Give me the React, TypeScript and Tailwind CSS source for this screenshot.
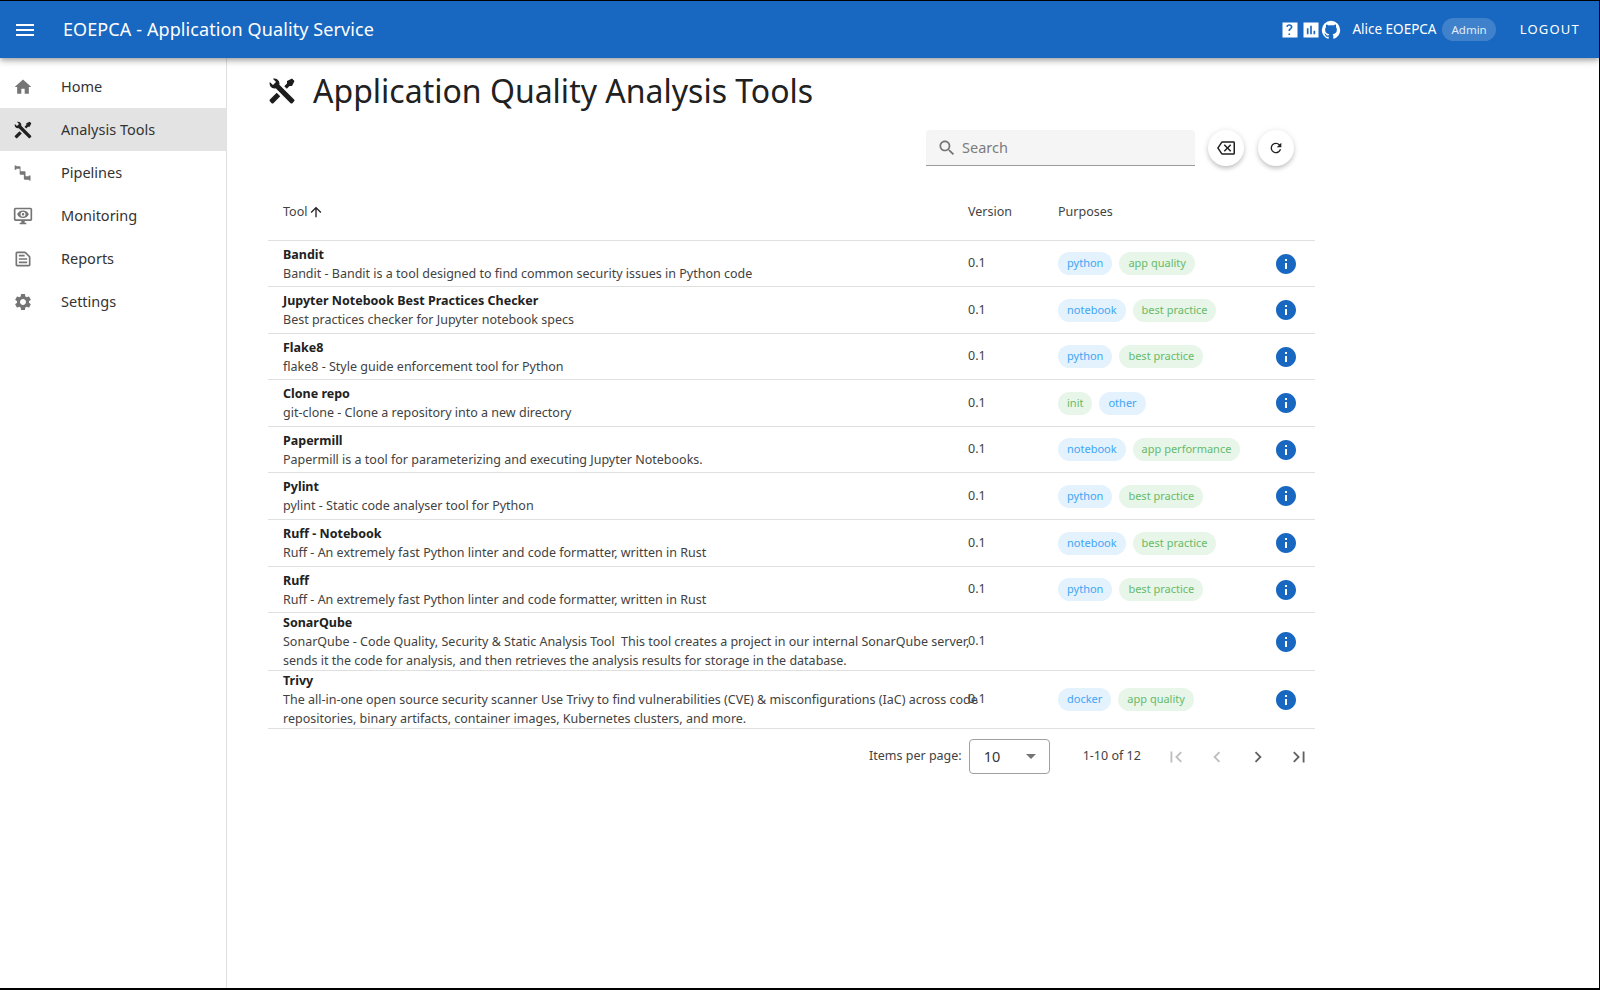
import React from "react";

const P = ({ d, size = 24, className = "" }: { d: string; size?: number; className?: string }) => (
  <svg viewBox="0 0 24 24" width={size} height={size} fill="currentColor" className={className}>
    <path d={d} />
  </svg>
);

const tools = "M21.71 20.29L20.29 21.71A1 1 0 0 1 18.88 21.71L7 9.85A3.81 3.81 0 0 1 6 10A4 4 0 0 1 2.22 4.7L4.76 7.24L5.29 6.71L6.71 5.29L7.24 4.76L4.7 2.22A4 4 0 0 1 10 6A3.81 3.81 0 0 1 9.85 7L21.71 18.88A1 1 0 0 1 21.71 20.29M2.29 18.88A1 1 0 0 0 2.29 20.29L3.71 21.71A1 1 0 0 0 5.12 21.71L10.59 16.25L7.76 13.42M20 2L16 4V6L13.83 8.17L15.83 10.17L18 8H20L22 4Z";
const home = "M10 20v-6h4v6h5v-8h3L12 3 2 12h3v8z";
const pipe = "M2 3h2v1h4a1 1 0 0 1 1 1v5h5a1 1 0 0 1 1 1v5h4v-1h2v6h-2v-1h-5a1 1 0 0 1-1-1v-5H9a1 1 0 0 1-1-1V7H4v1H2z";
const monitorEye = "M3 2C1.9 2 1 2.9 1 4v12c0 1.1.9 2 2 2h7v2H8v2h8v-2h-2v-2h7c1.1 0 2-.9 2-2V4c0-1.1-.9-2-2-2zm0 2h18v12H3zm9 1.5C8.7 5.5 6 7.5 5 10c1 2.5 3.7 4.500 7 4.500s6-2 7-4.500c-1-2.500-3.700-4.500-7-4.500zm0 1.500a3 3 0 1 1 0 6 3 3 0 0 1 0-6zm0 1.500a1.500 1.500 0 1 0 0 3 1.500 1.500 0 0 0 0-3z";
const report = "M14.17 5L19 9.83V19H5V5h9.170M14.170 3H5c-1.100 0-2 .9-2 2v14c0 1.100.9 2 2 2h14c1.100 0 2-.9 2-2V9.830c0-.53-.21-1.040-.59-1.410l-4.830-4.830c-.37-.38-.88-.59-1.410-.59zM7 15h10v2H7zm0-4h10v2H7zm0-4h7v2H7z";
const cog = "M19.14 12.94c.04-.3.060-.61.060-.94 0-.32-.02-.64-.07-.94l2.030-1.580c.18-.14.23-.41.120-.61l-1.920-3.320c-.12-.22-.37-.29-.59-.22l-2.390.96c-.5-.38-1.030-.7-1.620-.94l-.36-2.540c-.04-.24-.24-.41-.48-.41h-3.840c-.24 0-.43.17-.47.41l-.36 2.540c-.59.24-1.130.57-1.620.94l-2.390-.96c-.22-.08-.47 0-.59.22L2.740 8.870c-.12.21-.08.47.12.61l2.030 1.580c-.05.3-.09.63-.09.94s.02.64.07.94l-2.030 1.580c-.18.14-.23.41-.12.61l1.920 3.320c.12.22.37.29.59.22l2.390-.96c.5.38 1.030.7 1.620.94l.36 2.540c.05.24.24.41.48.41h3.840c.24 0 .44-.17.47-.41l.36-2.540c.59-.24 1.130-.56 1.620-.94l2.390.96c.22.08.47 0 .59-.22l1.920-3.320c.12-.22.07-.47-.12-.61l-2.010-1.580zM12 15.600c-1.980 0-3.600-1.620-3.600-3.600s1.620-3.600 3.600-3.600 3.600 1.620 3.600 3.600-1.620 3.600-3.600 3.600z";
const menu = "M3 18h18v-2H3v2zm0-5h18v-2H3v2zm0-7v2h18V6H3z";
const help = "M3 3h18v18H3zm9.100 13.200h-1.900v1.800h1.900zm-.9-11.200c-2.100 0-3.500 1.200-3.700 3.100l1.900.3c.1-1 .8-1.600 1.800-1.600s1.700.6 1.700 1.500c0 .7-.4 1.100-1.100 1.700-.9.7-1.600 1.400-1.600 2.800v.4h1.900v-.3c0-.8.4-1.200 1.100-1.800.9-.7 1.700-1.500 1.700-2.900 0-2-1.600-3.200-3.700-3.200z";
const bars = "M3 3h18v18H3zM7 10v7h2v-7zM11 7v10h2V7zM15 13v4h2v-4z";
const github = "M12 2A10 10 0 0 0 2 12c0 4.420 2.870 8.170 6.840 9.500.5.080.66-.23.660-.5v-1.690c-2.770.6-3.360-1.340-3.360-1.340-.46-1.160-1.110-1.470-1.110-1.470-.91-.62.070-.6.070-.6 1 .07 1.530 1.030 1.530 1.030.87 1.520 2.340 1.070 2.910.83.090-.65.350-1.090.630-1.340-2.220-.25-4.550-1.110-4.550-4.920 0-1.110.38-2 1.030-2.710-.1-.25-.45-1.290.1-2.640 0 0 .84-.27 2.750 1.020.79-.22 1.650-.33 2.500-.33.850 0 1.710.11 2.500.33 1.910-1.290 2.750-1.020 2.750-1.020.55 1.350.2 2.390.1 2.640.65.71 1.030 1.600 1.030 2.710 0 3.820-2.340 4.660-4.570 4.910.36.31.69.92.69 1.850V21c0 .27.160.59.670.5C19.140 20.160 22 16.420 22 12A10 10 0 0 0 12 2z";
const search = "M15.500 14h-.79l-.28-.27C15.410 12.590 16 11.110 16 9.500 16 5.910 13.090 3 9.500 3S3 5.910 3 9.500 5.910 16 9.500 16c1.610 0 3.090-.59 4.230-1.570l.27.28v.79l5 4.990L20.490 19l-4.990-5zm-6 0C7.010 14 5 11.990 5 9.500S7.010 5 9.500 5 14 7.010 14 9.500 11.990 14 9.500 14z";
const backspace = "M22 3H7c-.69 0-1.230.35-1.590.88L0 12l5.410 8.110c.36.53.9.89 1.590.89h15c1.100 0 2-.9 2-2V5c0-1.100-.9-2-2-2zm0 16H7.070L2.400 12l4.660-7H22v14zm-11.590-2L14 13.410 17.590 17 19 15.590 15.410 12 19 8.410 17.590 7 14 10.590 10.410 7 9 8.410 12.590 12 9 15.590z";
const refresh = "M17.650 6.350A7.960 7.960 0 0 0 12 4a8 8 0 1 0 7.730 10h-2.080A6 6 0 1 1 12 6c1.660 0 3.140.69 4.220 1.780L13 11h7V4z";
const up = "M4 12l1.410 1.410L11 7.830V20h2V7.830l5.580 5.590L20 12l-8-8-8 8z";
const info = "M12 2C6.480 2 2 6.480 2 12s4.480 10 10 10 10-4.480 10-10S17.520 2 12 2zm1 15h-2v-6h2v6zm0-8h-2V7h2v2z";
const first = "M18.410 16.590L13.820 12l4.590-4.590L17 6l-6 6 6 6zM6 6h2v12H6z";
const prev = "M15.410 7.410L14 6l-6 6 6 6 1.410-1.410L10.830 12z";
const next = "M10 6L8.590 7.410 13.170 12l-4.580 4.590L10 18l6-6z";
const last = "M5.590 7.410L10.180 12l-4.590 4.590L7 18l6-6-6-6zM16 6h2v12h-2z";

const nav = [
  { label: "Home", d: home },
  { label: "Analysis Tools", d: tools, active: true },
  { label: "Pipelines", d: pipe },
  { label: "Monitoring", d: monitorEye },
  { label: "Reports", d: report },
  { label: "Settings", d: cog },
];

type Row = { name: string; desc: string[]; chips: [string, "b" | "g"][]; h: string };
const rows: Row[] = [
  { name: "Bandit", desc: ["Bandit - Bandit is a tool designed to find common security issues in Python code"], chips: [["python", "b"], ["app quality", "g"]], h: "h-[46px]" },
  { name: "Jupyter Notebook Best Practices Checker", desc: ["Best practices checker for Jupyter notebook specs"], chips: [["notebook", "b"], ["best practice", "g"]], h: "h-[47px]" },
  { name: "Flake8", desc: ["flake8 - Style guide enforcement tool for Python"], chips: [["python", "b"], ["best practice", "g"]], h: "h-[46px]" },
  { name: "Clone repo", desc: ["git-clone - Clone a repository into a new directory"], chips: [["init", "g"], ["other", "b"]], h: "h-[47px]" },
  { name: "Papermill", desc: ["Papermill is a tool for parameterizing and executing Jupyter Notebooks."], chips: [["notebook", "b"], ["app performance", "g"]], h: "h-[46px]" },
  { name: "Pylint", desc: ["pylint - Static code analyser tool for Python"], chips: [["python", "b"], ["best practice", "g"]], h: "h-[47px]" },
  { name: "Ruff - Notebook", desc: ["Ruff - An extremely fast Python linter and code formatter, written in Rust"], chips: [["notebook", "b"], ["best practice", "g"]], h: "h-[47px]" },
  { name: "Ruff", desc: ["Ruff - An extremely fast Python linter and code formatter, written in Rust"], chips: [["python", "b"], ["best practice", "g"]], h: "h-[46px]" },
  { name: "SonarQube", desc: ["SonarQube - Code Quality, Security & Static Analysis Tool  This tool creates a project in our internal SonarQube server,", "sends it the code for analysis, and then retrieves the analysis results for storage in the database."], chips: [], h: "h-[58px]" },
  { name: "Trivy", desc: ["The all-in-one open source security scanner Use Trivy to find vulnerabilities (CVE) & misconfigurations (IaC) across code", "repositories, binary artifacts, container images, Kubernetes clusters, and more."], chips: [["docker", "b"], ["app quality", "g"]], h: "h-[58px]" },
];

export default function App() {
  return (
    <div className="flex h-[990px] w-[1600px] flex-col overflow-hidden border-t border-r border-b-2 border-black bg-white font-['Noto_Sans',sans-serif] text-[14px] text-[#212121]">
      <header className="relative z-10 flex h-[57px] shrink-0 items-center bg-[#1867c0] pr-[19px] pl-[13px] text-white shadow-[0_2px_4px_-1px_rgba(0,0,0,.2),0_4px_5px_0_rgba(0,0,0,.14),0_1px_10px_0_rgba(0,0,0,.12)]">
        <P d={menu} />
        <span className="ml-[26px] text-[18px] tracking-[.1px]">EOEPCA - Application Quality Service</span>
        <div className="ml-auto flex items-center">
          <P d={help} size={20} />
          <P d={bars} size={20} className="ml-[1px]" />
          <P d={github} size={22} className="ml-[-1px]" />
          <span className="ml-[10px] text-[13.5px]">Alice EOEPCA</span>
          <span className="ml-[6px] flex h-[23px] items-center rounded-full bg-[#4081cc] px-[9px] text-[11.5px] text-[#e3edf8]">Admin</span>
          <span className="ml-[24px] text-[13px] tracking-[1.2px]">LOGOUT</span>
        </div>
      </header>
      <div className="flex min-h-0 flex-1">
        <nav className="w-[227px] shrink-0 border-r border-[#e0e0e0] bg-white pt-[7px]">
          {nav.map((n) => (
            <div key={n.label} className={`flex h-[43px] items-center pl-[13px] ${n.active ? "bg-[#e3e3e3]" : ""}`}>
              <P d={n.d} size={20} className={n.active ? "text-[#212121]" : "text-[#757575]"} />
              <span className="ml-[28px] text-[14.500px] text-[#333]">{n.label}</span>
            </div>
          ))}
        </nav>
        <main className="w-[1088px] pt-[13px] pl-[41px]">
          <div className="flex items-center">
            <P d={tools} size={30} className="ml-[-1px] text-[#1d1d1d]" />
            <h1 className="ml-[16px] text-[32px] leading-[40px] font-normal">Application Quality Analysis Tools</h1>
          </div>
          <div className="mt-[19px] flex items-center pr-[21px]">
            <div className="ml-auto flex h-[36px] w-[269px] items-center rounded-t-[4px] border-b border-[#9a9a9a] bg-[#f5f5f5] pl-[11px] text-[#757575]">
              <P d={search} size={20} />
              <span className="ml-[5px] text-[14.500px] text-[#7c7c7c]">Search</span>
            </div>
            <button className="ml-[13px] flex h-[36px] w-[36px] items-center justify-center rounded-full bg-white shadow-[0_3px_5px_-1px_rgba(0,0,0,.2),0_1px_6px_0_rgba(0,0,0,.12)]">
              <P d={backspace} size={18} />
            </button>
            <button className="ml-[14px] flex h-[36px] w-[36px] items-center justify-center rounded-full bg-white shadow-[0_3px_5px_-1px_rgba(0,0,0,.2),0_1px_6px_0_rgba(0,0,0,.12)]">
              <P d={refresh} size={16} />
            </button>
          </div>
          <div className="mt-[21px] w-[1047px]">
            <div className="flex h-[54px] items-center border-b border-[#e0e0e0] pb-[3px] text-[12.500px] text-[#424242]">
              <span className="ml-[15px] w-[685px] flex items-center">Tool<P d={up} size={16} className="ml-[1px] text-[#212121]" /></span>
              <span className="w-[90px]">Version</span>
              <span>Purposes</span>
            </div>
            {rows.map((r) => (
              <div key={r.name} className={`flex items-center border-b border-[#e0e0e0] ${r.h}`}>
                <div className="w-[700px] pl-[15px] leading-[19px]">
                  <div className="text-[12.500px] font-bold text-[#212121]">{r.name}</div>
                  {r.desc.map((l) => (
                    <div key={l} className="text-[12.500px] whitespace-pre text-[#424242]">{l}</div>
                  ))}
                </div>
                <div className="w-[90px] text-[12.500px] text-[#424242]">0.1</div>
                <div className="flex w-[216px] items-center gap-[7px]">
                  {r.chips.map(([c, k]) => (
                    <span key={c} className={`flex h-[23px] items-center rounded-full px-[9px] text-[11px] ${k === "b" ? "bg-[#e3f2fd] text-[#42a5f5]" : "bg-[#e8f5e9] text-[#66bb6a]"}`}>{c}</span>
                  ))}
                </div>
                <P d={info} size={24} className="text-[#1867c0]" />
              </div>
            ))}
            <div className="flex h-[55px] items-center text-[12.500px] text-[#424242]">
              <span className="ml-[601px]">Items per page:</span>
              <div className="ml-[7px] flex h-[35px] w-[81px] items-center rounded-[4px] border border-[#a0a0a0] pr-[13px] pl-[14px] text-[14.500px] text-[#333]">
                10
                <span className="ml-auto h-0 w-0 border-x-[5px] border-t-[5px] border-x-transparent border-t-[#757575]" />
              </div>
              <span className="ml-[33px]">1-10 of 12</span>
              <P d={first} size={22} className="ml-[24px] text-[#bdbdbd]" />
              <P d={prev} size={22} className="ml-[19px] text-[#bdbdbd]" />
              <P d={next} size={22} className="ml-[19px] text-[#616161]" />
              <P d={last} size={22} className="ml-[19px] text-[#616161]" />
            </div>
          </div>
        </main>
      </div>
    </div>
  );
}
